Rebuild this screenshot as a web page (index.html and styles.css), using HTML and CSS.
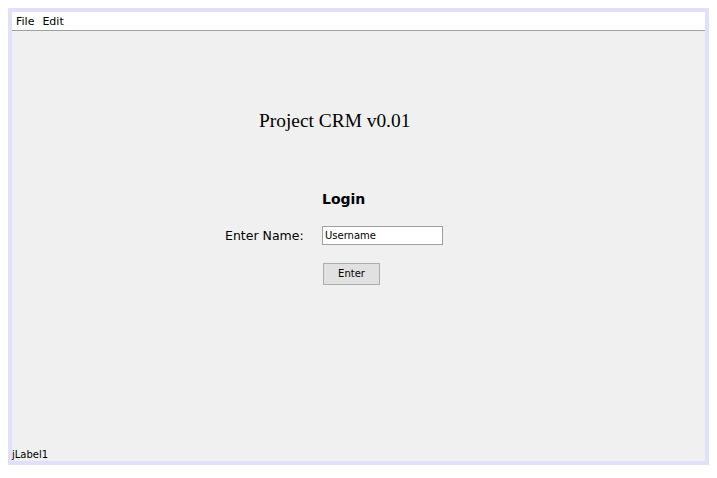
FILE: index.html
```html
<!DOCTYPE html>
<html>
<head>
<meta charset="utf-8">
<link rel="stylesheet" href="styles.css">
</head>
<body>
<div class="frame">
  <div class="menubar">
    <span class="menu">File</span>
    <span class="menu">Edit</span>
  </div>
  <div class="content">
    <div class="title">Project CRM v0.01</div>
    <div class="form">
      <div class="login">Login</div>
      <div class="row">
        <span class="label">Enter Name:</span>
        <div class="field">Username</div>
      </div>
      <div class="btn">Enter</div>
    </div>
    <div class="status">jLabel1</div>
  </div>
</div>
</body>
</html>
```

FILE: styles.css
```css
html, body {
  margin: 0;
  padding: 0;
  background: #ffffff;
}
body {
  padding: 8px;
}
.frame {
  width: 693px;
  height: 449px;
  border: 4px solid #e0e0fa;
  display: flex;
  flex-direction: column;
  font-family: "DejaVu Sans", sans-serif;
}
.menubar {
  height: 18px;
  background: #ffffff;
  border-bottom: 1px solid #a0a0a0;
  display: flex;
  align-items: center;
  gap: 8px;
  padding-left: 4px;
  font-family: "DejaVu Sans", sans-serif;
  font-size: 11px;
  color: #000;
}
.content {
  flex: 1;
  background: #f0f0f0;
  display: flex;
  flex-direction: column;
}
.title {
  margin-top: 79px;
  margin-left: 247px;
  font-family: "Liberation Serif", serif;
  font-size: 19.4px;
  color: #000;
  height: 22px;
  line-height: 22px;
}
.form {
  margin-top: 58px;
  display: flex;
  flex-direction: column;
}
.login {
  margin-left: 310px;
  font-weight: bold;
  font-size: 14px;
  height: 18px;
  line-height: 18px;
}
.row {
  margin-top: 17px;
  display: flex;
  align-items: center;
  height: 20px;
}
.label {
  margin-left: 213px;
  width: 97px;
  font-size: 12.5px;
}
.field {
  width: 117px;
  height: 17px;
  border: 1px solid #a0a0a0;
  background: #fff;
  font-size: 10px;
  line-height: 17px;
  padding-left: 2px;
}
.btn {
  margin-top: 18px;
  margin-left: 311px;
  width: 55px;
  height: 20px;
  border: 1px solid #adadad;
  background: #e1e1e1;
  font-size: 10px;
  line-height: 20px;
  text-align: center;
}
.status {
  margin-top: auto;
  font-size: 10px;
  height: 13px;
  line-height: 13px;
}
```
